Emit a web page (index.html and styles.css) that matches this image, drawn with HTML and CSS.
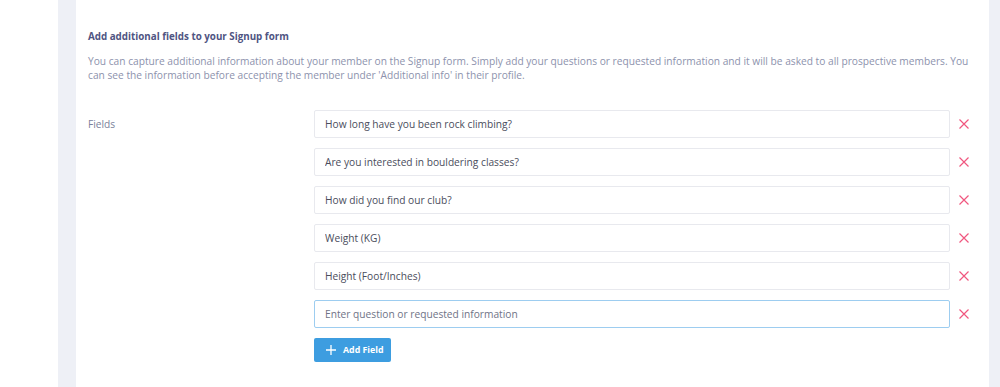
FILE: index.html
```html
<!DOCTYPE html>
<html lang="en">
  <head>
    <meta charset="UTF-8" />
    <title>Signup form fields</title>
    <link rel="stylesheet" href="styles.css">
  </head>
  <body>
    <div class="page">
      <div class="gutter"></div>
      <div class="card">
        <h2 class="title">Add additional fields to your Signup form</h2>
        <p class="intro">
          You can capture additional information about your member on the Signup form. Simply add your questions or requested information and it will be asked to all prospective members. You can see the information before accepting the member under 'Additional info' in their profile.
        </p>

        <div class="form-row">
          <label class="row-label">Fields</label>
          <div class="field-list">
            <div class="field">
              <input type="text" value="How long have you been rock climbing?" />
              <span class="remove"><svg width="10" height="10" viewBox="0 0 10 10"><path d="M0.5 0.5L9.5 9.5M9.5 0.5L0.5 9.5" stroke="currentColor" stroke-width="1.2" /></svg></span>
            </div>
            <div class="field">
              <input type="text" value="Are you interested in bouldering classes?" />
              <span class="remove"><svg width="10" height="10" viewBox="0 0 10 10"><path d="M0.5 0.5L9.5 9.5M9.5 0.5L0.5 9.5" stroke="currentColor" stroke-width="1.2" /></svg></span>
            </div>
            <div class="field">
              <input type="text" value="How did you find our club?" />
              <span class="remove"><svg width="10" height="10" viewBox="0 0 10 10"><path d="M0.5 0.5L9.5 9.5M9.5 0.5L0.5 9.5" stroke="currentColor" stroke-width="1.2" /></svg></span>
            </div>
            <div class="field">
              <input type="text" value="Weight (KG)" />
              <span class="remove"><svg width="10" height="10" viewBox="0 0 10 10"><path d="M0.5 0.5L9.5 9.5M9.5 0.5L0.5 9.5" stroke="currentColor" stroke-width="1.2" /></svg></span>
            </div>
            <div class="field">
              <input type="text" value="Height (Foot/Inches)" />
              <span class="remove"><svg width="10" height="10" viewBox="0 0 10 10"><path d="M0.5 0.5L9.5 9.5M9.5 0.5L0.5 9.5" stroke="currentColor" stroke-width="1.2" /></svg></span>
            </div>
            <div class="field">
              <input type="text" class="active" placeholder="Enter question or requested information" />
              <span class="remove"><svg width="10" height="10" viewBox="0 0 10 10"><path d="M0.5 0.5L9.5 9.5M9.5 0.5L0.5 9.5" stroke="currentColor" stroke-width="1.2" /></svg></span>
            </div>
            <div class="button-container">
              <button type="button">
                <svg width="10" height="10" viewBox="0 0 10 10">
                  <path d="M5 0v10M0 5h10" stroke="#fff" stroke-width="1.3" />
                </svg>
                Add Field
              </button>
            </div>
          </div>
        </div>
      </div>
      <div class="gutter right"></div>
    </div>
  </body>
</html>
```

FILE: styles.css
```css
* {
  box-sizing: border-box;
}
body {
  font-family: "Open Sans", sans-serif;
  background-color: #ffffff;
  margin: 0;
  height: 387px;
  overflow: hidden;
}
.page {
  display: flex;
  height: 387px;
  padding-left: 58px;
}
.gutter {
  width: 18px;
  background-color: #eef0f6;
}
.gutter.right {
  width: 11px;
}
.card {
  flex: 1;
  background-color: #ffffff;
  padding: 30px 12px 0 12px;
}
.title {
  font-size: 9.8px;
  font-weight: 700;
  color: #4f5482;
  margin: 0 0 11px;
}
.intro {
  font-size: 10.2px;
  line-height: 14px;
  color: #8d92ad;
  margin: 0 0 28px;
}
.form-row {
  display: flex;
}
.row-label {
  width: 226px;
  font-size: 10.2px;
  color: #7a7f9b;
  padding-top: 7px;
}
.field-list {
  flex: 1;
}
.field {
  display: flex;
  align-items: center;
  height: 28px;
  margin-bottom: 10px;
}
.field input {
  flex: 1;
  height: 28px;
  border: 1px solid #e8e9ee;
  border-radius: 2px;
  padding: 0 10px;
  font-family: "Open Sans", sans-serif;
  font-size: 10.2px;
  color: #4a4d5c;
  outline: none;
}
.field input.active {
  border-color: #9dcdf0;
}
.field input::placeholder {
  color: #6f7386;
}
.remove {
  display: flex;
  justify-content: center;
  width: 27px;
  color: #f0577f;
}
button {
  display: inline-flex;
  align-items: center;
  gap: 7px;
  background-color: #3d9de0;
  color: #ffffff;
  font-family: "Open Sans", sans-serif;
  font-size: 8.8px;
  font-weight: 700;
  height: 24px;
  padding: 0 8px 0 12px;
  border: none;
  border-radius: 2px;
  cursor: pointer;
}
```
